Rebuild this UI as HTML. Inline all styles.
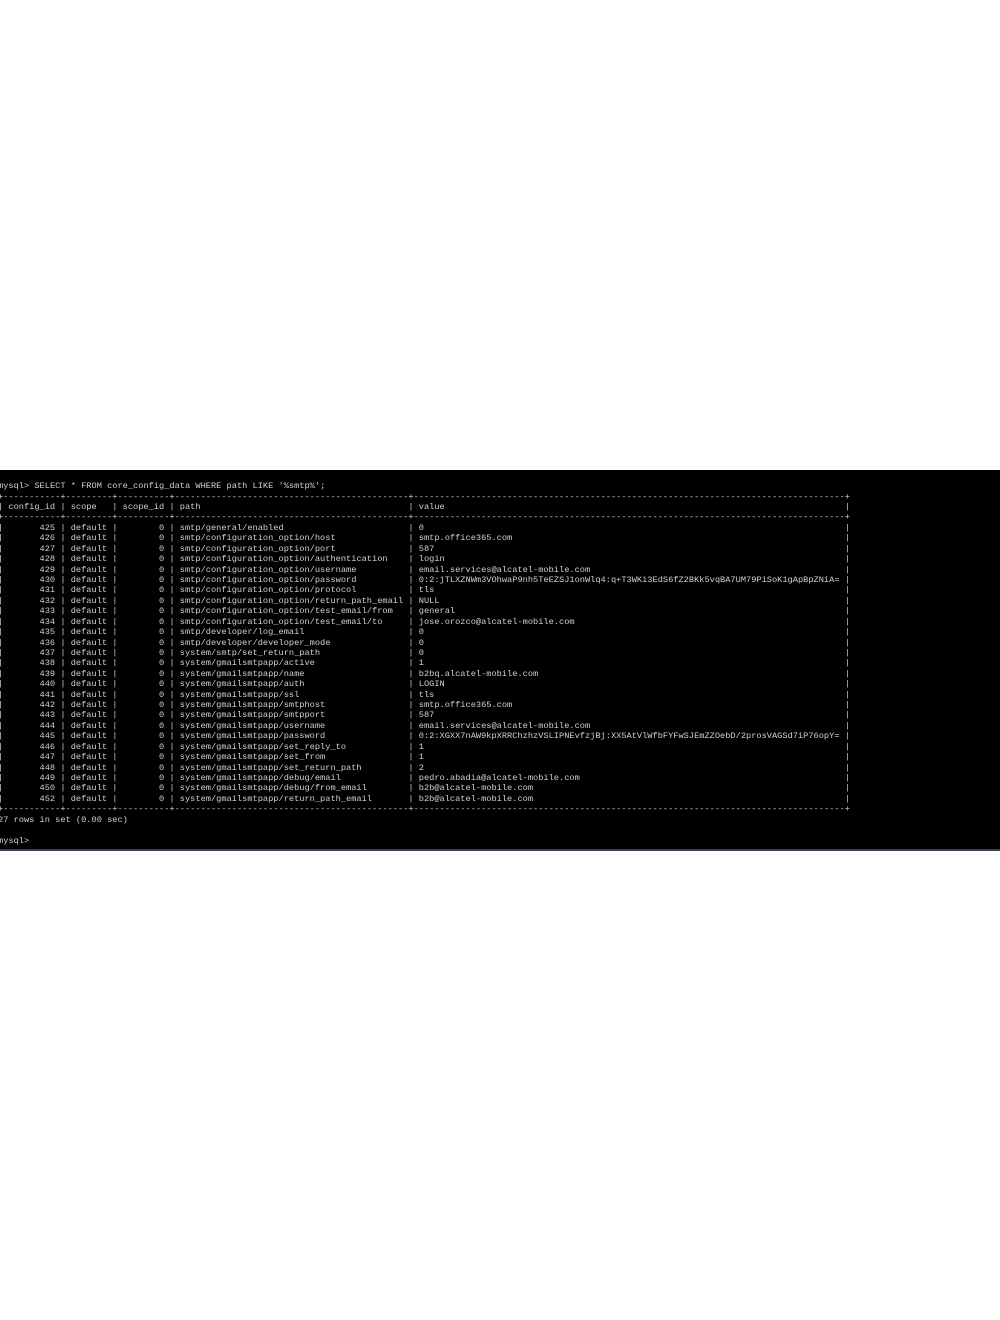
<!DOCTYPE html>
<html><head><meta charset="utf-8"><style>
html,body{margin:0;padding:0;background:#fff;width:1000px;height:1320px;overflow:hidden}
#term{position:absolute;left:0;top:470px;width:1000px;height:380px;background:#000;overflow:hidden}
#strip{position:absolute;left:0;top:849px;width:1000px;height:2px;background:#3a4658}
pre{position:absolute;margin:0;font-family:"Liberation Mono",monospace;font-size:8.66px;line-height:10.42px;color:#d2d2d2;top:11.2px}
.h{top:32.04px}
.d{top:52.88px}
.r{text-align:right}
</style></head><body>
<div id="term">
<pre style="left:-2px">mysql&gt; SELECT * FROM core_config_data WHERE path LIKE '%smtp%';
+-----------+---------+----------+---------------------------------------------+-----------------------------------------------------------------------------------+

+-----------+---------+----------+---------------------------------------------+-----------------------------------------------------------------------------------+



























+-----------+---------+----------+---------------------------------------------+-----------------------------------------------------------------------------------+
27 rows in set (0.00 sec)

mysql&gt; </pre>
<pre class="h" style="left:-2px">|

|
|
|
|
|
|
|
|
|
|
|
|
|
|
|
|
|
|
|
|
|
|
|
|
|
|
|</pre>
<pre class="h" style="left:calc(-2px + 12ch)">|

|
|
|
|
|
|
|
|
|
|
|
|
|
|
|
|
|
|
|
|
|
|
|
|
|
|
|</pre>
<pre class="h" style="left:calc(-2px + 22ch)">|

|
|
|
|
|
|
|
|
|
|
|
|
|
|
|
|
|
|
|
|
|
|
|
|
|
|
|</pre>
<pre class="h" style="left:calc(-2px + 33ch)">|

|
|
|
|
|
|
|
|
|
|
|
|
|
|
|
|
|
|
|
|
|
|
|
|
|
|
|</pre>
<pre class="h" style="left:calc(-2px + 79ch)">|

|
|
|
|
|
|
|
|
|
|
|
|
|
|
|
|
|
|
|
|
|
|
|
|
|
|
|</pre>
<pre class="h" style="left:calc(-2px + 163ch)">|

|
|
|
|
|
|
|
|
|
|
|
|
|
|
|
|
|
|
|
|
|
|
|
|
|
|
|</pre>
<pre class="h" style="left:calc(-2px + 2ch)">config_id</pre>
<pre class="h" style="left:calc(-2px + 14ch)">scope</pre>
<pre class="h" style="left:calc(-2px + 24ch)">scope_id</pre>
<pre class="h" style="left:calc(-2px + 35ch)">path</pre>
<pre class="h" style="left:calc(-2px + 81ch)">value</pre>
<pre class="d r" style="left:calc(-2px + 2ch);width:9ch">425
426
427
428
429
430
431
432
433
434
435
436
437
438
439
440
441
442
443
444
445
446
447
448
449
450
452</pre>
<pre class="d" style="left:calc(-2px + 14ch)">default
default
default
default
default
default
default
default
default
default
default
default
default
default
default
default
default
default
default
default
default
default
default
default
default
default
default</pre>
<pre class="d r" style="left:calc(-2px + 24ch);width:8ch">0
0
0
0
0
0
0
0
0
0
0
0
0
0
0
0
0
0
0
0
0
0
0
0
0
0
0</pre>
<pre class="d" style="left:calc(-2px + 35ch)">smtp/general/enabled
smtp/configuration_option/host
smtp/configuration_option/port
smtp/configuration_option/authentication
smtp/configuration_option/username
smtp/configuration_option/password
smtp/configuration_option/protocol
smtp/configuration_option/return_path_email
smtp/configuration_option/test_email/from
smtp/configuration_option/test_email/to
smtp/developer/log_email
smtp/developer/developer_mode
system/smtp/set_return_path
system/gmailsmtpapp/active
system/gmailsmtpapp/name
system/gmailsmtpapp/auth
system/gmailsmtpapp/ssl
system/gmailsmtpapp/smtphost
system/gmailsmtpapp/smtpport
system/gmailsmtpapp/username
system/gmailsmtpapp/password
system/gmailsmtpapp/set_reply_to
system/gmailsmtpapp/set_from
system/gmailsmtpapp/set_return_path
system/gmailsmtpapp/debug/email
system/gmailsmtpapp/debug/from_email
system/gmailsmtpapp/return_path_email</pre>
<pre class="d" style="left:calc(-2px + 81ch)">0
smtp.office365.com
587
login
email.services@alcatel-mobile.com
0:2:jTLXZNWm3VOhwaP9nh5TeEZSJ1onWlq4:q+T3WKi3EdS6fZ2BKk5vqBA7UM79PiSoK1gApBpZNiA=
tls
NULL
general
jose.orozco@alcatel-mobile.com
0
0
0
1
b2bq.alcatel-mobile.com
LOGIN
tls
smtp.office365.com
587
email.services@alcatel-mobile.com
0:2:XGXX7nAW9kpXRRChzhzVSLIPNEvfzjBj:XX5AtVlWfbFYFwSJEmZZOebD/2prosVAGSd7iP76opY=
1
1
2
pedro.abadia@alcatel-mobile.com
b2b@alcatel-mobile.com
b2b@alcatel-mobile.com</pre>
</div>
<div id="strip"></div>
</body></html>
